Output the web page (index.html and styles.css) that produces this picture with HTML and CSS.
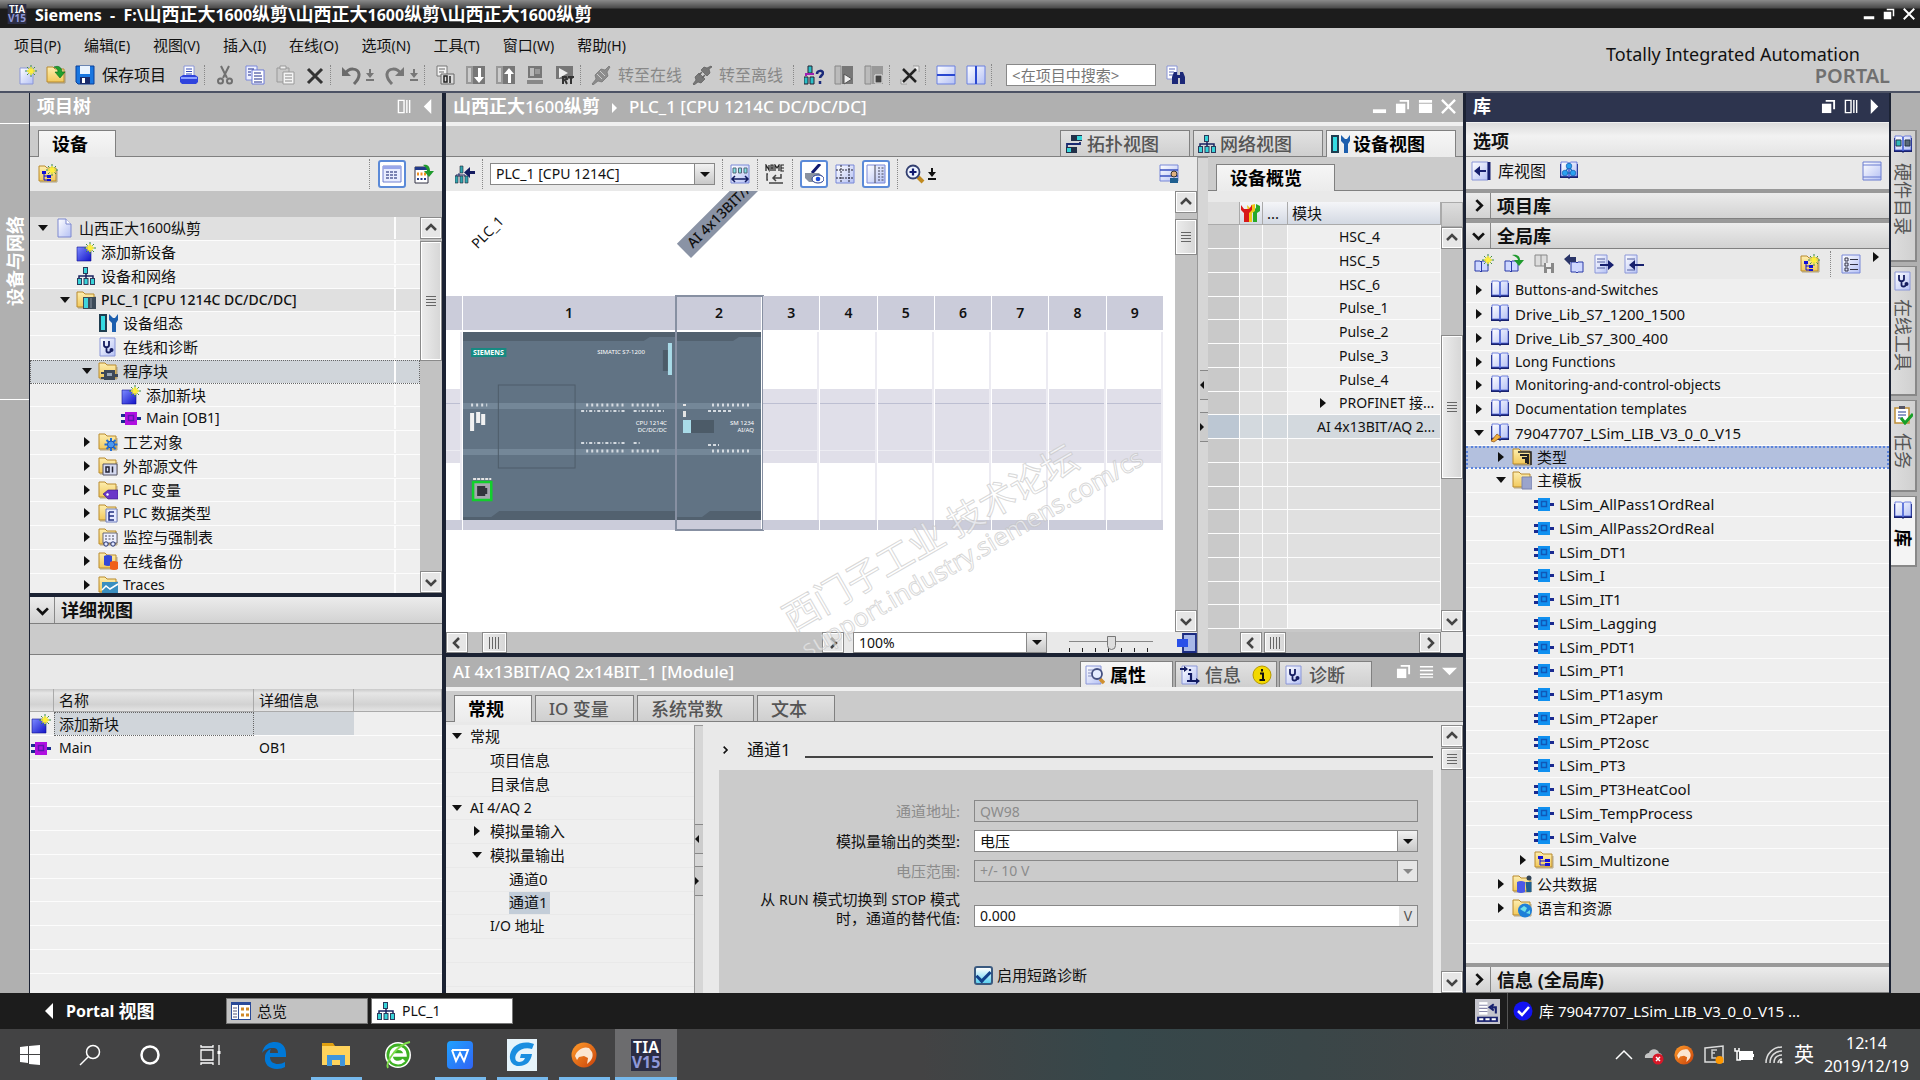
FILE: index.html
```html
<!DOCTYPE html>
<html lang="zh-CN">
<head>
<meta charset="utf-8">
<title>Siemens - TIA Portal V15</title>
<link rel="stylesheet" href="styles.css">
</head>
<body>
<svg class="defs" aria-hidden="true">
<defs>
<linearGradient id="gPage" x1="0" y1="0" x2="1" y2="1"><stop offset="0" stop-color="#fff"/><stop offset="1" stop-color="#b4c0f4"/></linearGradient>
<linearGradient id="gFold" x1="0" y1="0" x2="0" y2="1"><stop offset="0" stop-color="#fdeeb0"/><stop offset="1" stop-color="#f2c95c"/></linearGradient>
<linearGradient id="gBlue" x1="0" y1="0" x2="1" y2="1"><stop offset="0" stop-color="#7d8cff"/><stop offset="1" stop-color="#1313c8"/></linearGradient>
<linearGradient id="gOrange" x1="0" y1="0" x2="1" y2="1"><stop offset="0" stop-color="#ff9c2a"/><stop offset="1" stop-color="#c9410a"/></linearGradient>
<linearGradient id="gWps" x1="0" y1="0" x2="1" y2="1"><stop offset="0" stop-color="#1fa2ff"/><stop offset="1" stop-color="#3164f4"/></linearGradient>
</defs>
<symbol id="star" viewBox="0 0 20 20"><path d="M14 0v12M8 6h12M10 2l8 8M18 2l-8 8" stroke="#3b8a4a" stroke-width="1"/><path d="M14 2v8M10 6h8M11.500 3.500l5 5M16.500 3.500l-5 5" stroke="#ffee3a" stroke-width="1.500"/></symbol>
<symbol id="page" viewBox="0 0 20 20"><path d="M4 1h8l5 5v13H4z" fill="url(#gPage)" stroke="#7d88cf"/><path d="M12 1v5h5" fill="#fff" stroke="#7d88cf"/></symbol>
<symbol id="fold" viewBox="0 0 20 20"><path d="M1 17V2h6l2 2h9v13z" fill="url(#gFold)" stroke="#b98a2c"/><path d="M2 18h17V6" fill="none" stroke="#8f7436" stroke-opacity=".6"/></symbol>
<symbol id="new" viewBox="0 0 20 20"><path d="M3 3h13v16H3z" fill="url(#gPage)" stroke="#8a96d8"/><use href="#star"/></symbol>
<symbol id="open" viewBox="0 0 20 20"><use href="#fold"/><path d="M8 2c5-2 8 1 8 5h3l-5 6-5-6h3c0-3-2-4-4-5z" fill="#1fa02d" stroke="#0b6b1c" stroke-width=".6"/></symbol>
<symbol id="save" viewBox="0 0 20 20"><path d="M1 1h18v18H3l-2-2z" fill="#1976e0" stroke="#0b3f98"/><path d="M5 1h10v8H5z" fill="#eaf4ff"/><path d="M5 12h10v7H5z" fill="#1a2a6a"/><path d="M7 13h3v5H7z" fill="#fff"/></symbol>
<symbol id="print" viewBox="0 0 20 20"><path d="M5 1h10v10H5z" fill="#fff" stroke="#8a96d8"/><path d="M7 4h6M7 6.500h6M7 9h6" stroke="#334bb5"/><path d="M1 12l3-2h12l3 2v5l-2 2H3l-2-2z" fill="#2f43dd"/><path d="M2 12h16v2H2z" fill="#8da0ff"/></symbol>
<symbol id="cut" viewBox="0 0 20 20"><path d="M6 1l6 12M14 1L8 13" stroke="#707070" stroke-width="2"/><circle cx="5.500" cy="16" r="2.500" fill="none" stroke="#707070" stroke-width="2"/><circle cx="14.500" cy="16" r="2.500" fill="none" stroke="#707070" stroke-width="2"/></symbol>
<symbol id="copy" viewBox="0 0 20 20"><path d="M1 1h11v14H1z" fill="#eef1ff" stroke="#7a88dd"/><path d="M7 5h12v14H7z" fill="#fff" stroke="#6a78d8"/><path d="M3 4h6M3 7h3M3 10h3M9 8h7M9 11h8M9 14h8M9 17h8" stroke="#1c2a8c"/></symbol>
<symbol id="paste" viewBox="0 0 20 20"><path d="M2 3h12v14H2z" fill="#c9c9c9" stroke="#999"/><path d="M5 1h6v3H5z" fill="#eee" stroke="#999"/><path d="M8 7h11v12H8z" fill="#f4f4f4" stroke="#999"/><path d="M10 10h7M10 13h7M10 16h7" stroke="#888"/></symbol>
<symbol id="del" viewBox="0 0 20 20"><path d="M3 4l14 14M17 4L3 18" stroke="#333" stroke-width="3"/></symbol>
<symbol id="undo" viewBox="0 0 20 20"><path d="M1 2v9h9z" fill="#6b6b6b"/><path d="M4 9c4-7 13-6 14 0 .5 4-2 7-5 10" fill="none" stroke="#6b6b6b" stroke-width="3"/></symbol>
<symbol id="redo" viewBox="0 0 20 20"><path d="M19 2v9h-9z" fill="#777"/><path d="M16 9C12 2 3 3 2 9c-.5 4 2 7 5 10" fill="none" stroke="#777" stroke-width="3"/></symbol>
<symbol id="dn" viewBox="0 0 10 20"><path d="M4 4h2v4h3l-4 5-4-5h3zM1 14h8v2H1z" fill="currentColor"/></symbol>
<symbol id="comp" viewBox="0 0 20 20"><path d="M2 1h10v10H2z" fill="#f2f2f2" stroke="#777"/><path d="M4 4h6M4 7h5" stroke="#666"/><path d="M6 9h13v10H6z" fill="#ddd" stroke="#666"/><path d="M9 11h3v6H9zM15 11v7" fill="none" stroke="#222" stroke-width="1.500"/></symbol>
<symbol id="dl" viewBox="0 0 20 20"><path d="M1 1h7v18H1z" fill="#999"/><path d="M3 3h3v14H3z" fill="#ccc"/><path d="M8 1h12v18H8z" fill="#777"/><path d="M13 3h3v9h3l-5 6-5-6h4z" fill="#fff"/></symbol>
<symbol id="ul" viewBox="0 0 20 20"><path d="M1 1h7v18H1z" fill="#999"/><path d="M3 3h3v14H3z" fill="#ccc"/><path d="M8 1h12v18H8z" fill="#777"/><path d="M13 18h3V9h3l-5-6-5 6h4z" fill="#fff"/></symbol>
<symbol id="sim" viewBox="0 0 20 20"><path d="M3 1h14v12H3z" fill="#777"/><path d="M5 3h4v8H5z" fill="#bbb"/><path d="M10 4h5v5h-5z" fill="#999"/><path d="M2 15h16v4H2z" fill="#888"/></symbol>
<symbol id="rt" viewBox="0 0 20 20"><path d="M1 1h17v13H1z" fill="#777"/><path d="M4 3l9 5-9 5z" fill="#eee"/><path d="M8 19v-7h3l1 2-2 1 2 4M13 12h6M16 12v7" fill="none" stroke="#333" stroke-width="2"/></symbol>
<symbol id="plug" viewBox="0 0 20 20"><path d="M1 19l4-5-1-4 6-6 4 1 4-4 1 1-3 5 1 4-6 6-4-1-5 4z" fill="#8c8c8c" stroke="#707070" stroke-width=".7"/><path d="M6 9l5 5M9 6l5 5" stroke="#ccc"/></symbol>
<symbol id="unplug" viewBox="0 0 20 20"><path d="M1 19l3-4-1-3 4-4 6 6-4 4-3-1-4 3zM19 1l-4 2-3-1-3 3 6 6 3-3-1-4 3-2z" fill="#777" stroke="#5c5c5c" stroke-width=".7"/><path d="M7 10l3-3M10 13l3-3" stroke="#666" stroke-width="1.500"/></symbol>
<symbol id="net" viewBox="0 0 20 20"><path d="M10 7v5M3 13v-3h14v3" fill="none" stroke="#1a2260" stroke-width="1.500"/><path d="M7 1h5v7H7zM1 12h5v7H1zM7.500 12h5v7h-5zM14 12h5v7h-5z" fill="#2b3a5c"/><path d="M8 2h3v5H8zM2 13h3v5H2zM8.500 13h3v5h-3zM15 13h3v5h-3z" fill="#37d3d8"/></symbol>
<symbol id="netq" viewBox="0 0 20 20"><path d="M4 1h4v7H4zM0 12h4v7H0zM6 12h4v7H6z" fill="#2ac0c8" stroke="#223"/><path d="M2 11V9h8" stroke="#a020b0" stroke-width="2" fill="none"/><path d="M13 9c0-4 6-4 6-1 0 2-3 3-3 5M16 16v3" fill="none" stroke="#1a2a7a" stroke-width="2.500"/></symbol>
<symbol id="run" viewBox="0 0 20 20"><path d="M1 1h6v18H1z" fill="#bbb" stroke="#888"/><path d="M8 1h11v18H8z" fill="#777"/><path d="M10 9l8 5-8 5z" fill="#eee" stroke="#555"/></symbol>
<symbol id="stop" viewBox="0 0 20 20"><path d="M1 1h6v18H1z" fill="#bbb" stroke="#888"/><path d="M8 1h11v18H8z" fill="#999"/><path d="M11 10h7v8h-7z" fill="#444" stroke="#eee"/></symbol>
<symbol id="xref" viewBox="0 0 20 20"><path d="M13 1h6v6M1 14v5h6" fill="#eee" stroke="#999"/><path d="M3 4l13 13M16 4L3 17" stroke="#222" stroke-width="2.500"/></symbol>
<symbol id="sph" viewBox="0 0 20 20"><path d="M1 1h18v18H1z" fill="url(#gPage)" stroke="#6a80e0"/><path d="M1 10h18" stroke="#2a48d0" stroke-width="2"/></symbol>
<symbol id="spv" viewBox="0 0 20 20"><path d="M1 1h18v18H1z" fill="url(#gPage)" stroke="#6a80e0"/><path d="M10 1v18" stroke="#2a48d0" stroke-width="2"/></symbol>
<symbol id="bino" viewBox="0 0 20 20"><path d="M1 1h10v13H1z" fill="#fff" stroke="#8a96d8"/><path d="M3 4h6M3 7h5M3 10h4" stroke="#5a68b8"/><path d="M6 19v-7l2-5h3v3h3V7h3l2 5v7h-5v-6h-2v6z" fill="#1c2878"/></symbol>
<symbol id="foldnew" viewBox="0 0 20 20"><use href="#fold"/><path d="M4 7h4v3H4zM9 11h4v3H9zM9 15h4v2H9z" fill="#1010d8"/><path d="M6 10v6h3M6 12h3" fill="none" stroke="#1010d8"/><use href="#star"/></symbol>
<symbol id="foldtree" viewBox="0 0 20 20"><use href="#fold"/><path d="M4 6h5v3H4zM11 9h5v3h-5zM11 13h5v3h-5z" fill="#1010d8"/><path d="M6 9v6h5M6 11h5" fill="none" stroke="#1010d8"/></symbol>
<symbol id="grid" viewBox="0 0 20 20"><path d="M1 2h18v16H1z" fill="#e9edff" stroke="#7080d0"/><path d="M1 2h18v3H1z" fill="#9aa8ea"/><path d="M4 8h12M4 11h12M4 14h12" stroke="#55609a" stroke-width="1.500" stroke-dasharray="3 1"/></symbol>
<symbol id="gridgo" viewBox="0 0 20 20"><path d="M1 3h13v16H1z" fill="#fff" stroke="#334"/><path d="M1 3h13v3H1z" fill="#223a8a"/><path d="M3 10h9" stroke="#f09020" stroke-width="3" stroke-dasharray="2 1.500"/><path d="M3 15h9" stroke="#223a8a" stroke-width="2" stroke-dasharray="2 1.500"/><path d="M9 1c5-1 7 2 7 6h4l-5 6-5-6h3c0-3-2-4-4-6z" fill="#1f9a2d"/></symbol>
<symbol id="add" viewBox="0 0 20 20"><path d="M1 5h14v14H1z" fill="url(#gBlue)" stroke="#0d0d90" stroke-width=".6"/><use href="#star"/></symbol>
<symbol id="plc" viewBox="0 0 20 20"><use href="#fold"/><path d="M7 7h13v12H7z" fill="#3c4a58"/><path d="M8 8h4v10H8z" fill="#3fd4dc"/><path d="M15 8v10" stroke="#8793a0"/></symbol>
<symbol id="cfg" viewBox="0 0 20 20"><path d="M1 1h8v18H1z" fill="#1f3d50"/><path d="M3 3h4v14H3z" fill="#35dbe2"/><path d="M11 1v6l3 3v9h4v-9l2-3V1l-3 4h-2z" fill="#1d5fae"/></symbol>
<symbol id="diag" viewBox="0 0 20 20"><path d="M2 1h15v18H2z" fill="url(#gPage)" stroke="#8a96d8"/><path d="M6 4v4c0 3 5 3 5 0V4M8.500 11v3c0 2 4 2 4 0" fill="none" stroke="#141c60" stroke-width="1.800"/><circle cx="13.500" cy="13" r="2" fill="#141c60"/></symbol>
<symbol id="fb" viewBox="0 0 20 20"><path d="M0 6h5v3H0zM0 12h5v3H0zM14 9h6v3h-6z" fill="#1a2a90"/><path d="M4 4h12v13H4z" fill="currentColor"/><path d="M7.500 7.500h5v5h-5z" fill="none" stroke="#102080" stroke-opacity=".5" stroke-width="1.500"/></symbol>
<symbol id="fprog" viewBox="0 0 20 20"><use href="#fold"/><path d="M3 11h4v2H3zM3 16h4v2H3zM16 13h4v3h-4zM6 9h11v10H6z" fill="#3d4858"/><path d="M9 12h5v3H9z" fill="#9aa6b5"/></symbol>
<symbol id="fgear" viewBox="0 0 20 20"><use href="#fold"/><path d="M13 6v13M6.500 12.500h13M8.500 8l9 9M17.500 8l-9 9" stroke="#1f6fd8" stroke-width="2"/><circle cx="13" cy="12.500" r="3.500" fill="#4a98f0" stroke="#1f4fb0"/></symbol>
<symbol id="f01" viewBox="0 0 20 20"><use href="#fold"/><path d="M5 8h14v11H5z" fill="#d5daf0" stroke="#556"/><path d="M8 11h3v5H8zM14.500 10.500v6" fill="none" stroke="#223" stroke-width="1.500"/></symbol>
<symbol id="ftag" viewBox="0 0 20 20"><use href="#fold"/><path d="M5 14l5-4h10v9H10z" fill="#6a35c8" stroke="#3a1880" stroke-width=".6"/><circle cx="9.500" cy="14.500" r="1.200" fill="#fff"/></symbol>
<symbol id="fe" viewBox="0 0 20 20"><use href="#fold"/><path d="M8 6h11v13H8z" fill="#e6eaff" stroke="#7080c0"/><path d="M11 9v8h5M11 9h5M11 13h5" fill="none" stroke="#223080" stroke-width="1.500"/></symbol>
<symbol id="ftab" viewBox="0 0 20 20"><use href="#fold"/><path d="M5 6h14v10H5z" fill="#eef0ff" stroke="#667"/><path d="M7 9h10M7 12h10" stroke="#445" stroke-dasharray="2 1.500"/><circle cx="8" cy="17" r="2.200" fill="#dfe6ff" stroke="#223070"/><circle cx="15" cy="17" r="2.200" fill="#dfe6ff" stroke="#223070"/></symbol>
<symbol id="fbak" viewBox="0 0 20 20"><use href="#fold"/><path d="M6 5q4-2 8 0v9q-4 2-8 0z" fill="#3348d8"/><path d="M12 11q4-2 8 0v7q-4 2-8 0z" fill="#f06018"/></symbol>
<symbol id="ftrace" viewBox="0 0 20 20"><use href="#fold"/><path d="M4 7h16v12H4z" fill="#3a8fc0"/><path d="M4 15l4-4 4 3 8-5" fill="none" stroke="#fff" stroke-width="1.500"/></symbol>
<symbol id="ftype" viewBox="0 0 20 20"><use href="#fold"/><path d="M6 5h13v13" fill="none" stroke="#222" stroke-width="1.500"/><path d="M8 8h8v9M10 11h4v5" fill="none" stroke="#222" stroke-width="2"/></symbol>
<symbol id="fcopy" viewBox="0 0 20 20"><use href="#fold"/><path d="M10 7h10v12H10z" fill="#9aa4cc" stroke="#7a84b0"/></symbol>
<symbol id="fdata" viewBox="0 0 20 20"><use href="#fold"/><path d="M5 8q4-2 8 0v10q-4 2-8 0z" fill="#4a58e8"/><circle cx="17" cy="4" r="2.500" fill="#345"/><path d="M13.500 8h6v10h-5z" fill="#1f5f90"/></symbol>
<symbol id="flang" viewBox="0 0 20 20"><use href="#fold"/><circle cx="13" cy="12.500" r="7" fill="#1f80d8"/><path d="M8 11l4-3 3 2-2 4-2-1zM14 15l4-3v4z" fill="#6fe0e8"/></symbol>
<symbol id="book" viewBox="0 0 20 20"><path d="M1 17V3h18v14h-8l-1 1-1-1z" fill="#17206e"/><path d="M2 1h6l2 1 2-1h6v14h-7l-1 1-1-1H2z" fill="url(#gPage)" stroke="#5468d8" stroke-width=".8"/><path d="M10 2v14" stroke="#3a55d0" stroke-width="1.500"/></symbol>
<symbol id="bookedit" viewBox="0 0 20 20"><use href="#book"/><path d="M1 18l6-7 4 3-7 5z" fill="#f0b040" stroke="#8a4a10" stroke-width=".7"/></symbol>
<symbol id="booknew" viewBox="0 0 20 20"><path d="M1 7h5l1 1 1-1h6v10H8l-1 1-1-1H1z" fill="#cfd8ff" stroke="#2a3aa8"/><path d="M7.500 8v10" stroke="#2a3aa8"/><use href="#star"/></symbol>
<symbol id="bookopen" viewBox="0 0 20 20"><path d="M1 7h5l1 1 1-1h6v10H8l-1 1-1-1H1z" fill="#cfd8ff" stroke="#2a3aa8"/><path d="M7.500 8v10" stroke="#2a3aa8"/><path d="M8 1c6-1 8 2 8 5h4l-5 6-5-6h4c0-2-2-3-6-5z" fill="#1f9a2d"/></symbol>
<symbol id="booksave" viewBox="0 0 20 20"><path d="M1 1h12v11H1zM7 1v11" fill="#ddd" stroke="#888"/><path d="M10 9h10v10H10z" fill="#888"/><path d="M12 9h5v4h-5zM13 15h4v4h-4z" fill="#eee"/></symbol>
<symbol id="bookundo" viewBox="0 0 20 20"><path d="M7 8h5l1 1 1-1h5v10h-5l-1 1-1-1H7z" fill="#cfd8ff" stroke="#2a3aa8"/><path d="M0 5l6-5v3h6v5H6v3z" fill="#2a3568"/></symbol>
<symbol id="exp" viewBox="0 0 20 20"><path d="M1 1h12v18H1z" fill="url(#gPage)" stroke="#8a96d8"/><path d="M3 5h8M3 8h8M3 14h8" stroke="#5560a0"/><path d="M6 10h8V6l6 5-6 5v-4H6z" fill="#17206e"/></symbol>
<symbol id="imp" viewBox="0 0 20 20"><path d="M1 1h12v18H1z" fill="url(#gPage)" stroke="#8a96d8"/><path d="M3 5h8M3 16h8" stroke="#5560a0"/><path d="M20 10h-9V6l-6 5 6 5v-4h9z" fill="#17206e"/></symbol>
<symbol id="list" viewBox="0 0 20 20"><path d="M1 1h18v18H1z" fill="url(#gPage)" stroke="#7888d8"/><path d="M4 4h3v3H4zM4 9h3v3H4zM4 14h3v3H4z" fill="none" stroke="#334"/><path d="M9 5.500h8M9 10.500h8M9 15.500h8" stroke="#334"/></symbol>
<symbol id="back" viewBox="0 0 20 20"><path d="M1 1h16v18H1z" fill="url(#gPage)" stroke="#8a96d8"/><path d="M18 1v18" stroke="#17206e" stroke-width="3"/><path d="M15 9H9V5l-6 5 6 5v-4h6z" fill="#17206e"/></symbol>
<symbol id="libtri" viewBox="0 0 20 20"><use href="#book"/><path d="M10 5L6 12h8z" fill="none" stroke="#1a70c8" stroke-width="1.500"/><circle cx="10" cy="5" r="2.800" fill="#2aa0f0" stroke="#1560b0" stroke-width=".7"/><circle cx="6" cy="12" r="2.800" fill="#2aa0f0" stroke="#1560b0" stroke-width=".7"/><circle cx="14" cy="12" r="2.800" fill="#2aa0f0" stroke="#1560b0" stroke-width=".7"/></symbol>
<symbol id="win" viewBox="0 0 20 20"><path d="M1 1h18v18H1z" fill="url(#gPage)" stroke="#6a7cd0"/><path d="M1 4h18M1 16h18" stroke="#6a7cd0"/></symbol>
<symbol id="netin" viewBox="0 0 20 20"><path d="M4 9v4M1 13v-2h9v2" fill="none" stroke="#1a2260"/><path d="M5 2h3v7H5zM0 12h3v7H0zM5 12h3v7H5zM10 12h3v7h-3z" fill="#2fa6b0" stroke="#223" stroke-width=".6"/><path d="M20 7h-5V3L9 8.500l6 5.500v-4h5z" fill="#141c60"/></symbol>
<symbol id="meas" viewBox="0 0 20 20"><path d="M1 1h18v18H1z" fill="url(#gPage)" stroke="#7888d8"/><path d="M3 4h3v5H3zM8.500 4h3v5h-3zM14 4h3v5h-3z" fill="#7fe0e4" stroke="#567"/><path d="M2 15h16M5 12l-3 3 3 3M15 12l3 3-3 3" fill="none" stroke="#111a60" stroke-width="1.500"/></symbol>
<symbol id="name" viewBox="0 0 20 20"><path d="M1 7V1l3 5V1M6 7V1h2v6M6 4h2M10 7V1l2 3 2-3v6M19 1h-3v6h3M16 4h3" fill="none" stroke="#222" stroke-width="1.200"/><path d="M3 10h-1v6h1M16 10v4h-7M11 11l-3 3 3 3M4 19h14" fill="none" stroke="#444" stroke-width="1.500"/></symbol>
<symbol id="eye" viewBox="0 0 20 20"><path d="M16 0L8 9" stroke="#111a70" stroke-width="3"/><path d="M1 9h14l4 4v5H5l-4-4z" fill="#8a92a0"/><ellipse cx="14" cy="15" rx="6" ry="4" fill="#fff" stroke="#223a90"/><circle cx="14" cy="15" r="2.300" fill="#1a4ad8"/></symbol>
<symbol id="gridd" viewBox="0 0 20 20"><path d="M1 1h18v18H1z" fill="url(#gPage)" stroke="#7888d8"/><path d="M6 1v18M14 1v18M1 6h18M1 14h18" stroke="#223" stroke-dasharray="2 1"/></symbol>
<symbol id="pane" viewBox="0 0 20 20"><path d="M1 1h18v18H1z" fill="url(#gPage)" stroke="#7888d8"/><path d="M9 1v18M12 4h2M12 7h2M12 10h2M12 13h2M12 16h2M15.500 4h2M15.500 7h2M15.500 10h2M15.500 13h2M15.500 16h2" stroke="#445"/></symbol>
<symbol id="zoom" viewBox="0 0 20 20"><path d="M13 13l5 5" stroke="#c08a20" stroke-width="4"/><circle cx="8" cy="8" r="6.500" fill="#eef4ff" stroke="#333f70" stroke-width="1.800"/><path d="M8 4.500v7M4.500 8h7" stroke="#111a70" stroke-width="2.200"/></symbol>
<symbol id="user" viewBox="0 0 20 20"><path d="M1 1h18v16H1z" fill="url(#gPage)" stroke="#7888d8"/><path d="M1 6h18M1 12h18" stroke="#3a50c0" stroke-width="1.500"/><circle cx="15" cy="10" r="3" fill="#e0b080" stroke="#333"/><path d="M11 19v-5h8v5z" fill="#1f5f90"/></symbol>
<symbol id="topo" viewBox="0 0 20 20"><path d="M7 1h11v6H7zM2 13h11v6H2z" fill="#223048"/><path d="M13 2h5v4h-5zM3 14h4v4H3z" fill="#37d3d8"/><path d="M16 8v2H3v3" fill="none" stroke="#1a2a70" stroke-width="1.800"/></symbol>
<symbol id="wrench" viewBox="0 0 20 20"><path d="M12 2l3 4V1l4 2v5l-3 2v9h-4V9l2-2z" fill="#28a828"/><path d="M6 2l4 4V2l4-1v7l-3 2v9H7V9z" fill="#f0c818"/><path d="M0 2v5l3 3v9h5v-9l3-3V2L8 6H3z" fill="#d81818"/></symbol>
<symbol id="prop" viewBox="0 0 20 20"><path d="M1 1h15v18H1z" fill="url(#gPage)" stroke="#8a96d8"/><path d="M3 5h5M3 8h4M3 11h4" stroke="#8890c0"/><path d="M15 14l4 4" stroke="#d09030" stroke-width="3.500"/><circle cx="12" cy="9" r="5" fill="#e4ecff" stroke="#445080" stroke-width="1.800"/></symbol>
<symbol id="info" viewBox="0 0 20 20"><path d="M2 1h15v18H2z" fill="url(#gPage)" stroke="#8a96d8"/><path d="M0 3h4V1l4 3-4 3V5H0zM12 15h4v-2l4 3-4 3v-2h-4z" fill="#111a60"/><path d="M10 4v2M8 9h3v7M7 16h6" stroke="#111a60" stroke-width="2.200" fill="none"/></symbol>
<symbol id="ibadge" viewBox="0 0 20 20"><circle cx="10" cy="10" r="9" fill="#f2d800" stroke="#b89a00"/><path d="M10 4v2.500M8 8.500h3V15M7.500 15h5.500" stroke="#111" stroke-width="2" fill="none"/></symbol>
<symbol id="hw" viewBox="0 0 20 20"><use href="#book"/><path d="M3 5h5v6H3z" fill="#2fb8b8" stroke="#234"/><path d="M12 5h5v6h-5z" fill="#5a6a78" stroke="#234"/></symbol>
<symbol id="task" viewBox="0 0 20 20"><path d="M2 3h14v15H2z" fill="#fff" stroke="#c09038" stroke-width="1.500"/><path d="M6 1h6v3H6z" fill="#556"/><path d="M5 7h8M5 10h8M5 13h5" stroke="#223a90"/><path d="M8 13l4 5 8-9" fill="none" stroke="#18a028" stroke-width="3"/></symbol>
<symbol id="ovw" viewBox="0 0 20 20"><path d="M0 1h20v18H0z" fill="#2a4a98"/><path d="M1 4h6v14H1zM8 4h11v14H8z" fill="#fff"/><path d="M2 7h4M2 10h4M2 13h4M2 16h4" stroke="#557"/><path d="M10 8h3M15 8h3M10 14h3M15 14h3" stroke="#d08828" stroke-width="3"/></symbol>
<symbol id="zfit" viewBox="0 0 20 20"><path d="M6 1h13v18H6z" fill="#a8b8e8" stroke="#1a2a80" stroke-width="1.800"/><path d="M0 6h11v8H0z" fill="#2a50e8"/></symbol>
<symbol id="restore" viewBox="0 0 16 16"><path d="M5 1h10v10h-2V3H5z" fill="#fff"/><path d="M1 5h10v10H1z" fill="#fff"/></symbol>
<symbol id="mini" viewBox="0 0 16 16"><path d="M1 11h14v4H1z" fill="#fff"/></symbol>
<symbol id="maxi" viewBox="0 0 16 16"><path d="M1 1h14v3H1zM1 5h14v10H1z" fill="#fff"/></symbol>
<symbol id="cls" viewBox="0 0 16 16"><path d="M1 1l14 14M15 1L1 15" stroke="#fff" stroke-width="2.500"/></symbol>
<symbol id="cols" viewBox="0 0 16 16"><path d="M1.500 1.500h6v13h-6zM10.500 1v14M13.500 1v14" fill="none" stroke="#fff" stroke-width="1.500"/></symbol>
<symbol id="lines" viewBox="0 0 16 16"><path d="M1 3h14M1 7h14M1 11h14M1 14h14" stroke="#fff" stroke-width="1.500"/></symbol>
<symbol id="tl" viewBox="0 0 16 16"><path d="M12 0v16L4 8z" fill="#fff"/></symbol>
<symbol id="tr" viewBox="0 0 16 16"><path d="M4 0v16l8-8z" fill="#fff"/></symbol>
<symbol id="td" viewBox="0 0 16 16"><path d="M0 4h16l-8 8z" fill="#fff"/></symbol>
<symbol id="chev" viewBox="0 0 12 12"><path d="M1 8l5-5 5 5" fill="none" stroke="currentColor" stroke-width="2.500"/></symbol>
<symbol id="lynx" viewBox="0 0 26 26"><circle cx="13" cy="13" r="12.500" fill="url(#gOrange)"/><path d="M4 14C6 8 12 4 18 6l3 4c2 5-1 9-5 12l1-6-4-2-5 1-2 3z" fill="#fbe6d2"/></symbol>
<symbol id="tia" viewBox="0 0 30 32"><path d="M0 0h30v32H0z" fill="#2b2d44"/><text x="15" y="14" text-anchor="middle" font-size="16" font-weight="600" fill="#fff">TIA</text><text x="15" y="29" text-anchor="middle" font-size="16" font-weight="700" fill="#8f98d8">V15</text></symbol>
</svg>

<header class="titlebar">
  <svg class="i"><use href="#tia"/></svg>
  <h1><span lang="en">Siemens&nbsp; -&nbsp; F:\</span>山西正大<span lang="en">1600</span>纵剪\山西正大<span lang="en">1600</span>纵剪\山西正大<span lang="en">1600</span>纵剪</h1>
  <div class="wbtns"><button aria-label="最小化"><svg><use href="#mini"/></svg></button><button aria-label="还原"><svg><use href="#restore"/></svg></button><button aria-label="关闭"><svg><use href="#cls"/></svg></button></div>
</header>

<div class="command">
  <div class="command-left">
    <nav class="menu"><a href="#">项目<span lang="en">(P)</span></a><a href="#">编辑<span lang="en">(E)</span></a><a href="#">视图<span lang="en">(V)</span></a><a href="#">插入<span lang="en">(I)</span></a><a href="#">在线<span lang="en">(O)</span></a><a href="#">选项<span lang="en">(N)</span></a><a href="#">工具<span lang="en">(T)</span></a><a href="#">窗口<span lang="en">(W)</span></a><a href="#">帮助<span lang="en">(H)</span></a></nav>
    <div class="toolbar main-tools">
      <div class="grp tight"><button aria-label="新建"><svg class="i"><use href="#new"/></svg></button><button aria-label="打开"><svg class="i"><use href="#open"/></svg></button><button class="label"><svg class="i"><use href="#save"/></svg>保存项目</button><button aria-label="打印"><svg class="i"><use href="#print"/></svg></button></div>
      <div class="grp"><button aria-label="剪切"><svg class="i"><use href="#cut"/></svg></button><button aria-label="复制"><svg class="i"><use href="#copy"/></svg></button><button aria-label="粘贴"><svg class="i"><use href="#paste"/></svg></button><button aria-label="删除"><svg class="i"><use href="#del"/></svg></button></div>
      <div class="grp undo"><button aria-label="撤销"><svg class="i"><use href="#undo"/></svg><svg class="i half"><use href="#dn"/></svg></button><button aria-label="重做"><svg class="i"><use href="#redo"/></svg><svg class="i half"><use href="#dn"/></svg></button></div>
      <div class="grp"><button aria-label="编译"><svg class="i"><use href="#comp"/></svg></button><button aria-label="下载"><svg class="i"><use href="#dl"/></svg></button><button aria-label="上传"><svg class="i"><use href="#ul"/></svg></button><button aria-label="仿真"><svg class="i"><use href="#sim"/></svg></button><button aria-label="运行系统"><svg class="i"><use href="#rt"/></svg></button></div>
      <div class="grp online"><button class="label off"><svg class="i"><use href="#plug"/></svg>转至在线</button><button class="label off"><svg class="i"><use href="#unplug"/></svg>转至离线</button></div>
      <div class="grp"><button aria-label="可访问的设备"><svg class="i"><use href="#netq"/></svg></button><button aria-label="启动"><svg class="i"><use href="#run"/></svg></button><button aria-label="停止"><svg class="i"><use href="#stop"/></svg></button></div>
      <div class="grp"><button aria-label="交叉引用"><svg class="i"><use href="#xref"/></svg></button></div>
      <div class="grp"><button aria-label="水平拆分"><svg class="i"><use href="#sph"/></svg></button><button aria-label="垂直拆分"><svg class="i"><use href="#spv"/></svg></button></div>
      <div class="grp find"><input type="text" aria-label="在项目中搜索" placeholder="&lt;在项目中搜索&gt;"><button aria-label="搜索"><svg class="i"><use href="#bino"/></svg></button></div>
    </div>
  </div>
  <div class="brand"><p>Totally Integrated Automation</p><p class="portal">PORTAL</p></div>
</div>

<main class="work">
  <aside class="rail left-rail"><div class="rail-cap"></div><button class="rail-label">设备与网络</button><div class="rail-rest"></div></aside>

  <section class="panel project">
    <div class="phead"><h2>项目树</h2><button aria-label="列"><svg><use href="#cols"/></svg></button><button aria-label="折叠"><svg><use href="#tl"/></svg></button></div>
    <div class="tabs"><button class="tab on wide">设备</button></div>
    <div class="toolbar sub"><button aria-label="新建组"><svg class="i"><use href="#foldnew"/></svg></button><span class="push sep"></span><button class="boxed" aria-label="列表"><svg class="i"><use href="#grid"/></svg></button><button aria-label="转到"><svg class="i"><use href="#gridgo"/></svg></button></div>
    <div class="blank"></div>
    <div class="scrollbox">
      <ul class="tree rows two">
        <li class="l0 dark"><b class="tri d"></b><svg class="i"><use href="#page"/></svg>山西正大<span lang="en">1600</span>纵剪</li>
        <li class="l1"><b class="tri"></b><svg class="i"><use href="#add"/></svg>添加新设备</li>
        <li class="l1"><b class="tri"></b><svg class="i"><use href="#net"/></svg>设备和网络</li>
        <li class="l1 dark medium" lang="en"><b class="tri d"></b><svg class="i"><use href="#plc"/></svg>PLC_1 [CPU 1214C DC/DC/DC]</li>
        <li class="l2"><b class="tri"></b><svg class="i"><use href="#cfg"/></svg>设备组态</li>
        <li class="l2"><b class="tri"></b><svg class="i"><use href="#diag"/></svg>在线和诊断</li>
        <li class="l2 sel"><b class="tri d"></b><svg class="i"><use href="#fprog"/></svg>程序块</li>
        <li class="l3"><b class="tri"></b><svg class="i"><use href="#add"/></svg>添加新块</li>
        <li class="l3" lang="en"><b class="tri"></b><svg class="i ob"><use href="#fb"/></svg>Main [OB1]</li>
        <li class="l2"><b class="tri r"></b><svg class="i"><use href="#fgear"/></svg>工艺对象</li>
        <li class="l2"><b class="tri r"></b><svg class="i"><use href="#f01"/></svg>外部源文件</li>
        <li class="l2"><b class="tri r"></b><svg class="i"><use href="#ftag"/></svg><span lang="en">PLC&nbsp;</span>变量</li>
        <li class="l2"><b class="tri r"></b><svg class="i"><use href="#fe"/></svg><span lang="en">PLC&nbsp;</span>数据类型</li>
        <li class="l2"><b class="tri r"></b><svg class="i"><use href="#ftab"/></svg>监控与强制表</li>
        <li class="l2"><b class="tri r"></b><svg class="i"><use href="#fbak"/></svg>在线备份</li>
        <li class="l2" lang="en"><b class="tri r"></b><svg class="i"><use href="#ftrace"/></svg>Traces</li>
      </ul>
      <div class="sb v"><button aria-label="上"><svg><use href="#chev"/></svg></button><i class="thumb t-tree"></i><button class="end dn" aria-label="下"><svg><use href="#chev"/></svg></button></div>
    </div>
    <section class="details">
      <div class="acc"><button aria-label="折叠"><svg class="dnc"><use href="#chev"/></svg></button><h2>详细视图</h2></div>
      <div class="band1"></div><div class="band2"></div>
      <table class="dtable rows">
        <thead><tr><th class="c-ic"></th><th class="c-nm">名称</th><th class="c-dt">详细信息</th><th></th></tr></thead>
        <tbody>
          <tr class="dsel"><td><svg class="i"><use href="#add"/></svg></td><td class="focus">添加新块</td><td class="shade"></td><td></td></tr>
          <tr lang="en"><td><svg class="i ob"><use href="#fb"/></svg></td><td>Main</td><td>OB1</td><td></td></tr>
          <tr><td colspan="4"></td></tr><tr><td colspan="4"></td></tr><tr><td colspan="4"></td></tr><tr><td colspan="4"></td></tr><tr><td colspan="4"></td></tr><tr><td colspan="4"></td></tr><tr><td colspan="4"></td></tr><tr><td colspan="4"></td></tr><tr><td colspan="4"></td></tr><tr><td colspan="4"></td></tr>
        </tbody>
      </table>
    </section>
  </section>

  <div class="center">
    <section class="panel editor">
      <div class="phead"><h2>山西正大<span lang="en">1600</span>纵剪<b class="crumb"></b><span lang="en">PLC_1 [CPU 1214C DC/DC/DC]</span></h2><button aria-label="最小化"><svg><use href="#mini"/></svg></button><button aria-label="还原"><svg><use href="#restore"/></svg></button><button aria-label="最大化"><svg><use href="#maxi"/></svg></button><button aria-label="关闭"><svg><use href="#cls"/></svg></button></div>
      <div class="tabs right"><button class="tab view"><svg class="i"><use href="#topo"/></svg>拓扑视图</button><button class="tab view"><svg class="i"><use href="#net"/></svg>网络视图</button><button class="tab view on"><svg class="i"><use href="#cfg"/></svg>设备视图</button></div>
      <div class="edit-body">
        <div class="device">
          <div class="toolbar sub dev-tools">
            <button aria-label="网络"><svg class="i"><use href="#netin"/></svg></button><span class="sep"></span>
            <div class="combo dev"><select aria-label="设备" lang="en"><option>PLC_1 [CPU 1214C]</option></select><span class="arr"></span></div><span class="sep"></span>
            <button aria-label="测量"><svg class="i"><use href="#meas"/></svg></button><span class="sep"></span>
            <button aria-label="名称"><svg class="i"><use href="#name"/></svg></button><span class="sep"></span>
            <button class="boxed" aria-label="显示"><svg class="i"><use href="#eye"/></svg></button><button aria-label="网格"><svg class="i"><use href="#gridd"/></svg></button><button class="boxed" aria-label="窗格"><svg class="i"><use href="#pane"/></svg></button><span class="sep"></span>
            <button class="zoomer" aria-label="缩放"><svg class="i"><use href="#zoom"/></svg><svg class="i half"><use href="#dn"/></svg></button>
            <button class="push" aria-label="布局"><svg class="i"><use href="#user"/></svg></button>
          </div>
          <div class="canvas-row">
            <div class="canvas">
              <span class="tag plc-tag" lang="en">PLC_1</span>
              <span class="tag ai-tag" lang="en">AI 4x13BIT/AQ 2x14BIT_1</span>
              <div class="rack" lang="en">
                <div class="slot"><b></b><div class="bay"></div><i></i></div>
                <div class="slot"><b>1</b><div class="bay">
                  <svg class="mod" viewBox="0 0 210 188" preserveAspectRatio="none"><path d="M0 0h210v188H0z" fill="#617384"/><path d="M0 0h210v5h-25l-6 4H0zM0 188h210v-9H36l-8 6H0z" fill="#52616f"/><path d="M8 16h35v9H8z" fill="#168a82"/><text x="10" y="23" font-size="7" font-weight="700" fill="#fff">SIEMENS</text><text x="133" y="22" font-size="6" fill="#fff">SIMATIC S7-1200</text><path d="M198 18h8v21h-8z" fill="#4c5b68"/><path d="M203 11h4v32h-4z" fill="#a9dbe8"/><path d="M0 71h35v6H0zM35 71h76v6H35zM111 71h99v6h-99zM0 117h35v6H0zM111 117h99v6h-99zM35 117h76v6H35z" fill="#748798"/><path d="M35 53h76v83H35z" fill="none" stroke="#4f5d6a"/><path d="M8 73h16M122 73h38M167 73h30M122 119h38M167 119h30" stroke="#d4dae0" stroke-width="3" stroke-dasharray="2 3"/><path d="M117 79h45M169 79h30M117 111h45M169 111h8" stroke="#d4dae0" stroke-width="2" stroke-dasharray="3 2 1 2"/><path d="M7 81h4v18H7zM13 80h4v11h-4zM18 82h4v11h-4z" fill="#f1f1f1"/><text x="202" y="93" font-size="6" fill="#fff" text-anchor="end">CPU 1214C</text><text x="202" y="100" font-size="6" fill="#fff" text-anchor="end">DC/DC/DC</text><path d="M10 147h18" stroke="#e4e4e4" stroke-width="2" stroke-dasharray="3 1"/><path d="M10 150h18v18H10z" fill="#a6a6ae" stroke="#12cf2c" stroke-width="2.500"/><path d="M14 154h8v2h2v6h-2v2h-8z" fill="#33343c"/></svg>
                </div><i></i></div>
                <div class="slot picked"><b>2</b><div class="bay">
                  <svg class="mod" viewBox="0 0 84 188" preserveAspectRatio="none"><path d="M0 0h84v188H0z" fill="#617384"/><path d="M0 0h84v5H62l-6 4H0zM0 188h84v-9H33l-8 6H0z" fill="#52616f"/><path d="M0 71h84v6H0zM0 117h84v6H0z" fill="#748798"/><path d="M35 73h40M35 119h40" stroke="#d4dae0" stroke-width="3" stroke-dasharray="2 3"/><path d="M31 79h24M31 113h11" stroke="#d4dae0" stroke-width="2" stroke-dasharray="3 2"/><path d="M14 88h23v13H14z" fill="#4c5b68"/><path d="M6 88h8v13H6z" fill="#a9dbe8"/><path d="M6 72h3v2H6zM6 79h3v6H6z" fill="#e4e4e4"/><text x="77" y="93" font-size="6" fill="#fff" text-anchor="end">SM 1234</text><text x="77" y="100" font-size="6" fill="#fff" text-anchor="end">AI/AQ</text></svg>
                </div><i></i></div>
                <div class="slot"><b>3</b><div class="bay"></div><i></i></div><div class="slot"><b>4</b><div class="bay"></div><i></i></div><div class="slot"><b>5</b><div class="bay"></div><i></i></div><div class="slot"><b>6</b><div class="bay"></div><i></i></div><div class="slot"><b>7</b><div class="bay"></div><i></i></div><div class="slot"><b>8</b><div class="bay"></div><i></i></div><div class="slot"><b>9</b><div class="bay"></div><i></i></div>
              </div>
            </div>
            <div class="sb v"><button aria-label="上"><svg><use href="#chev"/></svg></button><i class="thumb t-canvas"></i><button class="end dn" aria-label="下"><svg><use href="#chev"/></svg></button></div>
          </div>
          <div class="zoombar">
            <div class="sb h"><button class="lf" aria-label="左"><svg><use href="#chev"/></svg></button><i class="thumb t-h"></i><button class="end rt" aria-label="右"><svg><use href="#chev"/></svg></button></div>
            <div class="combo pct"><select aria-label="缩放" lang="en"><option>100%</option></select><span class="arr"></span></div>
            <input type="range" aria-label="缩放级别" min="0" max="6" value="3">
            <svg class="i"><use href="#zfit"/></svg>
          </div>
          <div class="watermark"><p>西门子工业 技术论坛</p><p class="url">support.industry.siemens.com/cs</p></div>
        </div>
        <div class="split"><i class="l"></i><i class="r"></i></div>
        <div class="overview">
          <div class="tabs"><button class="tab on ov">设备概览</button></div>
          <div class="ov-body">
            <div class="ov-main">
              <table class="otable rows">
                <thead><tr><th class="o1"></th><th class="o2"><svg class="i"><use href="#wrench"/></svg></th><th class="o3">...</th><th>模块</th></tr></thead>
                <tbody lang="en">
                  <tr><td></td><td></td><td></td><td class="in">HSC_4</td></tr>
                  <tr><td></td><td></td><td></td><td class="in">HSC_5</td></tr>
                  <tr><td></td><td></td><td></td><td class="in">HSC_6</td></tr>
                  <tr><td></td><td></td><td></td><td class="in">Pulse_1</td></tr>
                  <tr><td></td><td></td><td></td><td class="in">Pulse_2</td></tr>
                  <tr><td></td><td></td><td></td><td class="in">Pulse_3</td></tr>
                  <tr><td></td><td></td><td></td><td class="in">Pulse_4</td></tr>
                  <tr><td></td><td></td><td></td><td class="arrow"><b class="tri r"></b>PROFINET 接...</td></tr>
                  <tr class="osel"><td></td><td></td><td></td><td class="mid">AI 4x13BIT/AQ 2...</td></tr>
                  <tr class="e"><td></td><td></td><td></td><td></td></tr><tr class="e"><td></td><td></td><td></td><td></td></tr><tr class="e"><td></td><td></td><td></td><td></td></tr><tr class="e"><td></td><td></td><td></td><td></td></tr><tr class="e"><td></td><td></td><td></td><td></td></tr><tr class="e"><td></td><td></td><td></td><td></td></tr><tr class="e"><td></td><td></td><td></td><td></td></tr><tr><td></td><td></td><td></td><td></td></tr>
                </tbody>
              </table>
              <div class="ov-foot"><div class="sb h"><button class="lf" aria-label="左"><svg><use href="#chev"/></svg></button><i class="thumb t-oh"></i><button class="end rt" aria-label="右"><svg><use href="#chev"/></svg></button></div></div>
            </div>
            <div class="ov-side"><div class="ov-corner"></div><div class="sb v"><button aria-label="上"><svg><use href="#chev"/></svg></button><i class="thumb t-ov"></i><button class="end dn" aria-label="下"><svg><use href="#chev"/></svg></button></div></div>
          </div>
        </div>
      </div>
    </section>

    <section class="panel inspector">
      <div class="phead ihead"><h2 lang="en">AI 4x13BIT/AQ 2x14BIT_1 [Module]</h2><button class="tab top on"><svg class="i"><use href="#prop"/></svg>属性</button><button class="tab top"><svg class="i"><use href="#info"/></svg>信息<svg class="i push"><use href="#ibadge"/></svg></button><button class="tab top"><svg class="i"><use href="#diag"/></svg>诊断</button><div class="ibtns"><button aria-label="还原"><svg><use href="#restore"/></svg></button><button aria-label="列表"><svg><use href="#lines"/></svg></button><button aria-label="折叠"><svg><use href="#td"/></svg></button></div></div>
      <div class="tabs low"><button class="tab on t78">常规</button><button class="tab t101"><span lang="en">IO&nbsp;</span>变量</button><button class="tab t119">系统常数</button><button class="tab t78">文本</button></div>
      <div class="ins-body">
        <ul class="nav rows">
          <li class="l0"><b class="tri d"></b>常规</li>
          <li class="l1"><b class="tri"></b>项目信息</li>
          <li class="l1"><b class="tri"></b>目录信息</li>
          <li class="l0" lang="en"><b class="tri d"></b>AI 4/AQ 2</li>
          <li class="l1"><b class="tri r"></b>模拟量输入</li>
          <li class="l1"><b class="tri d"></b>模拟量输出</li>
          <li class="l2"><b class="tri"></b>通道0</li>
          <li class="l2"><b class="tri"></b><mark>通道1</mark></li>
          <li class="l1"><b class="tri"></b><span lang="en">I/O&nbsp;</span>地址</li>
          <li></li><li></li><li></li>
        </ul>
        <div class="split ins"><i class="l"></i><i class="r"></i></div>
        <div class="props">
          <h3><svg><use href="#chev"/></svg><span>通道1</span><i></i></h3>
          <form>
            <label class="off" for="addr">通道地址:</label><input id="addr" type="text" value="QW98" disabled lang="en">
            <label for="kind">模拟量输出的类型:</label><div class="combo"><select id="kind"><option>电压</option></select><span class="arr"></span></div>
            <label class="off" for="range">电压范围:</label><div class="combo offc"><select id="range" disabled lang="en"><option>+/- 10 V</option></select><span class="arr"></span></div>
            <label for="sub">从 <span lang="en">RUN</span> 模式切换到 <span lang="en">STOP</span> 模式<br>时，通道的替代值:</label><div class="combo unit"><input id="sub" type="text" value="0.000" lang="en"><span lang="en">V</span></div>
            <div class="check"><input type="checkbox" id="sc" checked><label for="sc">启用短路诊断</label></div>
          </form>
        </div>
        <div class="sb v"><button aria-label="上"><svg><use href="#chev"/></svg></button><i class="thumb t-ins"></i><button class="end dn" aria-label="下"><svg><use href="#chev"/></svg></button></div>
      </div>
    </section>
  </div>

  <section class="panel library">
    <div class="phead navy"><h2>库</h2><button aria-label="还原"><svg><use href="#restore"/></svg></button><button aria-label="列"><svg><use href="#cols"/></svg></button><button aria-label="折叠"><svg><use href="#tr"/></svg></button></div>
    <h3 class="opts">选项</h3>
    <div class="toolbar sub libview"><button class="label"><svg class="i"><use href="#back"/></svg>库视图</button><button aria-label="类型"><svg class="i"><use href="#libtri"/></svg></button><button class="push" aria-label="窗口"><svg class="i"><use href="#win"/></svg></button></div>
    <div class="acc"><button aria-label="展开"><svg class="rtc"><use href="#chev"/></svg></button><h2>项目库</h2></div>
    <div class="acc"><button aria-label="折叠"><svg class="dnc"><use href="#chev"/></svg></button><h2>全局库</h2></div>
    <div class="toolbar sub libtools"><button aria-label="新建库"><svg class="i"><use href="#booknew"/></svg></button><button aria-label="打开库"><svg class="i"><use href="#bookopen"/></svg></button><button aria-label="保存库"><svg class="i"><use href="#booksave"/></svg></button><button aria-label="恢复"><svg class="i"><use href="#bookundo"/></svg></button><button aria-label="导出"><svg class="i"><use href="#exp"/></svg></button><button aria-label="导入"><svg class="i"><use href="#imp"/></svg></button><button class="push" aria-label="新建文件夹"><svg class="i"><use href="#foldnew"/></svg></button><span class="sep"></span><button aria-label="列表"><svg class="i"><use href="#list"/></svg></button><b class="tri r"></b></div>
    <ul class="tree rows lib" lang="en">
      <li class="l0"><b class="tri r"></b><svg class="i"><use href="#book"/></svg>Buttons-and-Switches</li>
      <li class="l0 id"><b class="tri r"></b><svg class="i"><use href="#book"/></svg>Drive_Lib_S7_1200_1500</li>
      <li class="l0 id"><b class="tri r"></b><svg class="i"><use href="#book"/></svg>Drive_Lib_S7_300_400</li>
      <li class="l0"><b class="tri r"></b><svg class="i"><use href="#book"/></svg>Long Functions</li>
      <li class="l0"><b class="tri r"></b><svg class="i"><use href="#book"/></svg>Monitoring-and-control-objects</li>
      <li class="l0"><b class="tri r"></b><svg class="i"><use href="#book"/></svg>Documentation templates</li>
      <li class="l0 id"><b class="tri d"></b><svg class="i"><use href="#bookedit"/></svg>79047707_LSim_LIB_V3_0_0_V15</li>
      <li class="l1 hot" lang="zh"><b class="tri r"></b><svg class="i"><use href="#ftype"/></svg>类型</li>
      <li class="l1" lang="zh"><b class="tri d"></b><svg class="i"><use href="#fcopy"/></svg>主模板</li>
      <li class="l2 id"><b class="tri"></b><svg class="i fb"><use href="#fb"/></svg>LSim_AllPass1OrdReal</li>
      <li class="l2 id"><b class="tri"></b><svg class="i fb"><use href="#fb"/></svg>LSim_AllPass2OrdReal</li>
      <li class="l2 id"><b class="tri"></b><svg class="i fb"><use href="#fb"/></svg>LSim_DT1</li>
      <li class="l2 id"><b class="tri"></b><svg class="i fb"><use href="#fb"/></svg>LSim_I</li>
      <li class="l2 id"><b class="tri"></b><svg class="i fb"><use href="#fb"/></svg>LSim_IT1</li>
      <li class="l2 id"><b class="tri"></b><svg class="i fb"><use href="#fb"/></svg>LSim_Lagging</li>
      <li class="l2 id"><b class="tri"></b><svg class="i fb"><use href="#fb"/></svg>LSim_PDT1</li>
      <li class="l2 id"><b class="tri"></b><svg class="i fb"><use href="#fb"/></svg>LSim_PT1</li>
      <li class="l2 id"><b class="tri"></b><svg class="i fb"><use href="#fb"/></svg>LSim_PT1asym</li>
      <li class="l2 id"><b class="tri"></b><svg class="i fb"><use href="#fb"/></svg>LSim_PT2aper</li>
      <li class="l2 id"><b class="tri"></b><svg class="i fb"><use href="#fb"/></svg>LSim_PT2osc</li>
      <li class="l2 id"><b class="tri"></b><svg class="i fb"><use href="#fb"/></svg>LSim_PT3</li>
      <li class="l2 id"><b class="tri"></b><svg class="i fb"><use href="#fb"/></svg>LSim_PT3HeatCool</li>
      <li class="l2 id"><b class="tri"></b><svg class="i fb"><use href="#fb"/></svg>LSim_TempProcess</li>
      <li class="l2 id"><b class="tri"></b><svg class="i fb"><use href="#fb"/></svg>LSim_Valve</li>
      <li class="l2 id"><b class="tri r"></b><svg class="i"><use href="#foldtree"/></svg>LSim_Multizone</li>
      <li class="l1" lang="zh"><b class="tri r"></b><svg class="i"><use href="#fdata"/></svg>公共数据</li>
      <li class="l1" lang="zh"><b class="tri r"></b><svg class="i"><use href="#flang"/></svg>语言和资源</li>
      <li></li><li></li>
    </ul>
    <div class="acc"><button aria-label="展开"><svg class="rtc"><use href="#chev"/></svg></button><h2>信息 (全局库)</h2></div>
  </section>

  <aside class="rail right-rail">
    <button class="rtab r1"><svg class="i"><use href="#hw"/></svg><span>硬件目录</span></button>
    <button class="rtab r2"><svg class="i"><use href="#diag"/></svg><span>在线工具</span></button>
    <button class="rtab r3"><svg class="i"><use href="#task"/></svg><span>任务</span></button>
    <button class="rtab r4 on"><svg class="i"><use href="#book"/></svg><span>库</span></button>
  </aside>
</main>

<footer class="status">
  <button class="portal-view"><svg><use href="#tl"/></svg><span lang="en">Portal&nbsp;</span>视图</button>
  <button class="wintab"><svg class="i"><use href="#ovw"/></svg>总览</button>
  <button class="wintab on" lang="en"><svg class="i"><use href="#net"/></svg>PLC_1</button>
  <div class="msg"><svg class="msgicon" viewBox="0 0 24 24"><path d="M0 0h24v24H0z" fill="#c4c4cc"/><path d="M4 3h8v12H4z" fill="#fff"/><path d="M4 6h8M4 9h8M4 12h8" stroke="#88a"/><path d="M20 14V8h-4M18 5l-4 3 4 3" fill="none" stroke="#17206e" stroke-width="2"/><path d="M2 17h20v5H2z" fill="#17206e"/><path d="M4 19.500h16" stroke="#fff" stroke-width="2" stroke-dasharray="4 2"/></svg><span class="msgtext"><svg class="i" viewBox="0 0 20 20"><circle cx="10" cy="10" r="9.500" fill="#1212f0"/><path d="M5 10l4 4 7-8" fill="none" stroke="#fff" stroke-width="2.500"/></svg>库 79047707_LSim_LIB_V3_0_0_V15 ...</span></div>
</footer>

<div class="taskbar">
  <button class="tk" aria-label="开始"><svg width="22" height="22" viewBox="0 0 22 22"><path d="M1 3l8-1v8H1zM10 2l11-1v9H10zM1 11h8v8l-8-1zM10 11h11v10l-11-1z" fill="#fff"/></svg></button>
  <button class="tk" aria-label="搜索"><svg width="22" height="22" viewBox="0 0 22 22"><circle cx="14" cy="8" r="6.500" fill="none" stroke="#fff" stroke-width="1.500"/><path d="M9 13l-8 8" stroke="#fff" stroke-width="1.500"/></svg></button>
  <button class="tk" aria-label="助手"><svg width="22" height="22" viewBox="0 0 22 22"><circle cx="11" cy="11" r="8.500" fill="none" stroke="#fff" stroke-width="2.500"/></svg></button>
  <button class="tk" aria-label="任务视图"><svg width="22" height="22" viewBox="0 0 22 22"><path d="M2 6h12v10H2zM2 1v2h12V1M2 21v-2h12v2M20 1v20" fill="none" stroke="#fff" stroke-width="1.300"/><path d="M18.500 7h3v3h-3z" fill="#fff"/></svg></button>
  <button class="tk app" aria-label="Edge"><svg width="26" height="28" viewBox="0 0 26 28"><path d="M1 12C3 3 9 1 14 1c8 0 11 6 11 12v3H9c0 5 4 7 8 7 3 0 5-1 7-2v5c-2 1-5 2-8 2C8 28 3 23 4 16c0-4 3-7 6-8-1 1-1 3-1 4h8c0-4-2-5-5-5-5 0-9 2-11 5z" fill="#0078d7"/></svg></button>
  <button class="tk app lit" aria-label="文件"><svg width="28" height="26" viewBox="0 0 28 26"><path d="M0 1h11l2 3H0z" fill="#e0a010"/><path d="M0 4h28v19H0z" fill="#ffd35c"/><path d="M5 24v-11h18v11h-5v-6h-8v6z" fill="#3f95dc"/></svg></button>
  <button class="tk app" aria-label="浏览器"><svg width="28" height="28" viewBox="0 0 28 28"><circle cx="14" cy="14" r="13" fill="#fff"/><circle cx="14" cy="14" r="11.500" fill="#3eb024"/><path d="M7 14h14c0-9-14-9-14 0s9 9 13 5" fill="none" stroke="#fff" stroke-width="3.500"/><path d="M4 27C1 22 12 4 26 1" fill="none" stroke="#7ddc4a" stroke-width="1.800"/></svg></button>
  <button class="tk app lit" aria-label="WPS"><svg width="26" height="28" viewBox="0 0 26 28"><rect width="26" height="28" rx="4" fill="url(#gWps)"/><path d="M5 9h16l-4 11-4-8-4 8-4-11" fill="none" stroke="#fff" stroke-width="2"/></svg></button>
  <button class="tk app lit" aria-label="浏览器"><svg width="30" height="32" viewBox="0 0 30 32"><path d="M0 0h30v32H0z" fill="#e6f4fb"/><path d="M27 5c-4-2-14-3-20 3-7 7-5 19 5 19 8 0 12-5 13-12H14l-1 4h5c-1 3-4 4-6 4-4 0-5-5-2-9s9-6 15-4z" fill="#1a8ee0"/></svg></button>
  <button class="tk app lit" aria-label="猎豹"><svg width="26" height="28" viewBox="0 0 26 26"><use href="#lynx"/></svg></button>
  <button class="tk app lit now" aria-label="TIA"><svg width="30" height="32"><use href="#tia"/></svg></button>
  <div class="tray">
    <svg viewBox="0 0 20 20"><path d="M2 14l8-8 8 8" fill="none" stroke="#fff" stroke-width="1.500"/></svg>
    <svg viewBox="0 0 20 20"><path d="M1 13c-1-4 3-5 4-5 1-5 9-5 10 0 3 0 4 4 2 5z" fill="#c4c4c4"/><circle cx="14" cy="14" r="5.500" fill="#d81828"/><path d="M12 12l4 4M16 12l-4 4" stroke="#fff" stroke-width="1.500"/></svg>
    <svg viewBox="0 0 26 26"><use href="#lynx"/></svg>
    <svg viewBox="0 0 20 20"><path d="M1 3l18-2v16H1z" fill="none" stroke="#ddd" stroke-width="1.500"/><path d="M13 5H8v3h3M8 8v5h4" fill="none" stroke="#ccc" stroke-width="1.500"/><circle cx="15.500" cy="15" r="4" fill="#ff9800"/></svg>
    <svg viewBox="0 0 20 20"><path d="M5 6h14v9H5z" fill="#fff"/><path d="M19 9h1v3h-1z" fill="#fff"/><path d="M1 3v3h4V3M3 6v9h4" fill="none" stroke="#fff" stroke-width="1.500"/></svg>
    <svg viewBox="0 0 20 20"><path d="M2 18C2 9 9 2 18 2M6 18C6 11 11 6 18 6M10 18c0-5 3-8 8-8M14 18c0-2 2-4 4-4" fill="none" stroke="#ddd" stroke-width="1.500"/><circle cx="17" cy="17" r="1.500" fill="#fff"/></svg>
    <span class="ime">英</span>
    <div class="clock" lang="en"><span>12:14</span><span>2019/12/19</span></div>
  </div>
</div>
</body>
</html>
```
FILE: styles.css
```css
* { box-sizing: border-box; }
body {
  margin: 0;
  height: 100vh;
  display: flex;
  flex-direction: column;
  overflow: hidden;
  font-family: "Noto Sans", "Noto Sans CJK SC", sans-serif;
  font-size: 15px;
  line-height: 20px;
  color: #111;
  background: #1b2233;
}
[lang=en] { font-size: 14px; }
[lang=zh] { font-size: 15px; }
h1, h2, h3, p, ul { margin: 0; padding: 0; }
ul { list-style: none; }
button, input, select { font: inherit; color: inherit; }
button { border: 0; padding: 0; background: none; display: flex; align-items: center; }
a { color: inherit; text-decoration: none; }
.defs { position: absolute; width: 0; height: 0; }
.i { width: 20px; height: 20px; flex: none; display: block; }
.i.half { width: 10px; color: #777; }
.ob { color: #b010e0; }
.fb { color: #1090f0; }

/* title bar */
.titlebar {
  flex: none;
  height: 28px;
  display: flex;
  align-items: center;
  gap: 8px;
  padding: 0 5px 0 7px;
  background: linear-gradient(#8a8a8a, #4a4a4a 8px, #1c1c1c 9px);
  color: #fff;
}
.titlebar h1 { font-size: 18px; line-height: 26px; font-weight: 700; white-space: pre; }
.titlebar h1 span { font-size: 16px; }
.wbtns { margin-left: auto; display: flex; gap: 8px; }
.wbtns svg { width: 12px; height: 12px; display: block; }

/* menu and main toolbar */
.command {
  flex: none;
  height: 65px;
  display: flex;
  justify-content: space-between;
  background: #ccc;
  border-bottom: 2px solid #4c5264;
}
.menu { display: flex; gap: 23px; padding: 7px 0 5px 14px; white-space: nowrap; }
.toolbar { display: flex; align-items: center; }
.main-tools { height: 28px; padding-left: 17px; }
.grp { display: flex; align-items: center; gap: 10px; padding-right: 5px; }
.grp + .grp { border-left: 1px dotted #888; padding-left: 10px; }
.grp.tight { gap: 9px; }
.grp.online { padding-right: 10px; }
.tight .label { padding-right: 4px; }
.label { gap: 7px; white-space: nowrap; font-size: 16px; }
.label.off { color: #888; }
.undo button { gap: 4px; }
.find input {
  width: 150px;
  height: 22px;
  padding: 0 5px;
  border: 1px solid #888;
  background: #fff;
}
.find.grp { padding-left: 14px; }
.find ::placeholder { color: #777; opacity: 1; }
.brand { padding: 15px 30px 0 0; text-align: right; font-size: 18px; }
.brand p { line-height: 22px; padding-right: 30px; }
.brand .portal { padding: 0; font-size: 20px; font-weight: 600; color: #707070; }

/* work area */
.work { flex: 1; min-height: 0; display: flex; }
.panel { background: #ececec; display: flex; flex-direction: column; min-width: 0; min-height: 0; overflow: hidden; }
.rail { flex: none; width: 29px; background: #b0b0b0; display: flex; flex-direction: column; }
.rail-cap { height: 31px; border-bottom: 1px solid #fff; }
.rail-label {
  height: 275px;
  justify-content: center;
  writing-mode: vertical-rl;
  text-orientation: sideways;
  transform: rotate(180deg);
  color: #fff;
  font-size: 18px;
  font-weight: 600;
}
.rail-rest { flex: 1; border-top: 1px solid #fff; }
.project { flex: 0 0 412px; margin: 0 4px 0 1px; }
.center { flex: 1; min-width: 0; display: flex; flex-direction: column; gap: 4px; }
.library { flex: 0 0 423px; margin: 0 2px 0 3px; }

.phead {
  flex: none;
  height: 33px;
  display: flex;
  align-items: center;
  gap: 8px;
  padding: 0 7px 2px 7px;
  background: #b0b0b0;
  border-bottom: 4px solid #f0f0f0;
  color: #fff;
}
.phead h2 { margin-right: auto; font-size: 18px; line-height: 27px; font-weight: 700; white-space: nowrap; }
.phead h2 [lang=en], .phead h2[lang=en] { font-size: 17px; font-weight: 500; }
.phead svg:not(.i) { width: 15px; height: 15px; display: block; }
.navy { background: #2d344e; border-bottom-width: 1px; height: 30px; }
.crumb { display: inline-block; margin: 0 12px; border: 5px solid transparent; border-left-color: #fff; border-right-width: 0; }

.tabs { flex: none; height: 31px; display: flex; align-items: flex-end; gap: 3px; padding: 0 7px 0 8px; background: #cbcbcb; border-bottom: 1px solid #808080; }
.tabs.right { justify-content: flex-end; }
.tab {
  height: 26px;
  padding: 0 13px;
  border: 1px solid #808080;
  border-width: 1px 1px 0 1px;
  background: linear-gradient(#e2e2e2, #cfcfcf);
  color: #555;
  font-size: 18px;
  font-weight: 500;
  white-space: nowrap;
}
.tab [lang=en] { font-size: 17px; }
.tab.on { background: linear-gradient(#f6f6f6, #ebebeb); color: #000; height: 27px; margin-bottom: -1px; font-weight: 700; }
.tab.wide { width: 78px; }
.tab.view { width: 130px; padding: 0 3px; gap: 3px; }
.tab.ov { width: 119px; }
.tab.t78 { width: 78px; }
.tab.t101 { width: 99px; }
.tab.t119 { width: 117px; }

.sub { flex: none; height: 34px; padding: 0 8px; gap: 8px; background: #e9e9e9; }
.sep { align-self: stretch; margin: 2px 0; border-left: 1px dotted #888; }
.push { margin-left: auto; }
.boxed { width: 28px; height: 28px; justify-content: center; background: #fff; border: 2px solid #5b8ad8; border-radius: 3px; }
.blank { flex: none; height: 26px; background: #c3c3c3; }

/* scroll bars */
.sb { flex: none; display: flex; background: #c2c2c2; }
.sb.v { width: 22px; flex-direction: column; }
.sb.h { height: 21px; }
.sb button { flex: none; width: 22px; height: 22px; justify-content: center; background: #e6e6e6; border: 1px solid #8a8a8a; box-shadow: inset 0 0 0 1px #fff; color: #444; }
.sb.h button { height: 21px; }
.sb button svg { width: 12px; height: 12px; }
.sb .end { margin: auto 0 0 0; }
.sb.h .end { margin: 0 0 0 auto; }
.dn svg, .dnc { transform: rotate(180deg); }
.lf svg { transform: rotate(270deg); }
.rt svg, .rtc { transform: rotate(90deg); }
.thumb { flex: none; display: flex; align-items: center; justify-content: center; background: linear-gradient(90deg, #ececec, #d6d6d6); border: 1px solid #8a8a8a; box-shadow: inset 0 0 0 1px #fff; }
.thumb::after { content: ""; width: 10px; height: 11px; background: repeating-linear-gradient(#666 0 1px, transparent 1px 3px); }
.h .thumb::after { width: 11px; height: 12px; background: repeating-linear-gradient(90deg, #666 0 1px, transparent 1px 3px); }
.t-tree { height: 120px; margin-top: 2px; }
.t-canvas { height: 36px; margin-top: 6px; }
.t-ov { height: 144px; margin-top: 86px; }
.t-ins { height: 22px; margin-top: 1px; }
.t-h { width: 25px; margin-left: 14px; }
.t-oh { width: 22px; margin-left: 2px; }

/* trees */
.scrollbox { flex: 1; min-height: 0; display: flex; overflow: hidden; }
.tree { flex: 1; min-height: 0; overflow: hidden; }
.rows li { display: flex; align-items: center; height: 24px; padding-bottom: 1px; border-bottom: 1px solid #fcfcfc; background: #efefef; white-space: nowrap; overflow: hidden; }
.rows li:nth-child(4n) { height: 23px; }
.rows .id { font-size: 15px; }
.tree .i { margin: 0 5px 0 6px; }
.tree .tri { margin: 0; }
.two li::after { content: ""; margin-left: auto; flex: none; width: 24px; align-self: stretch; border-left: 2px solid #fcfcfc; }
.l0 { padding-left: 8px; }
.l1 { padding-left: 30px; }
.l2 { padding-left: 52px; }
.l3 { padding-left: 75px; }
.tree .dark { background: #e0e0e0; }
.medium { font-weight: 500; }
.tree .sel { background: #d0d5da; outline: 1px dotted #666; outline-offset: -1px; }
.tree .hot { background: #b3c0de; outline: 2px dotted #5b84dc; outline-offset: -2px; }
.tri { flex: none; width: 10px; height: 10px; display: inline-flex; justify-content: center; align-items: center; }
.tri.d::before { content: ""; border: 5px solid transparent; border-top: 6px solid #111; border-bottom: 0; }
.tri.r::before { content: ""; border: 5px solid transparent; border-left: 6px solid #111; border-right: 0; }

/* details view */
.details { flex: 0 0 400px; border-top: 4px solid #1b2233; overflow: hidden; background: #efefef; }
.acc { flex: none; height: 30px; display: flex; border-top: 4px solid #999; border-bottom: 1px solid #808080; background: linear-gradient(#ececec, #d2d2d2); }
.details .acc { height: 27px; border-top: 0; }
.acc button { width: 25px; justify-content: center; border-right: 1px solid #888; }
.acc svg { width: 13px; height: 13px; }
.acc h2 { padding-left: 6px; font-size: 18px; line-height: 26px; font-weight: 700; }
.band1 { height: 31px; background: #cbcbcb; border-bottom: 1px solid #808080; }
.band2 { height: 34px; background: #e9e9e9; }
table { border-collapse: separate; border-spacing: 0; table-layout: fixed; width: 100%; }
th { height: 23px; padding: 0 5px; text-align: left; font-weight: 400; line-height: 20px; background: linear-gradient(#c9c9c9, #e6e6e6 4px, #d2d2d2 70%, #e4e4e4); border-right: 1px solid #aaa; border-bottom: 1px solid #aaa; }
td { height: 24px; padding: 0 5px; line-height: 20px; border-bottom: 1px solid #fcfcfc; white-space: nowrap; overflow: hidden; }
tr:nth-child(4n) td { height: 23px; }
.dtable td:first-child { padding: 0 1px; }
.c-ic { width: 24px; }
.c-nm { width: 200px; }
.c-dt { width: 100px; }
.dsel .shade, .dsel .focus { background: #d0d5da; }
.focus { outline: 1px dotted #666; outline-offset: -1px; }

/* device editor */
.editor { flex: 1; }
.edit-body { flex: 1; min-height: 0; display: flex; }
.device { flex: 1; min-width: 0; display: flex; flex-direction: column; position: relative; }
.dev-tools { padding: 0 18px 0 9px; gap: 7px; }
.dev-tools .half { color: #111; }
.zoomer { gap: 2px; }
.combo { display: flex; height: 22px; border: 1px solid #888; background: #fff; }
.combo select, .combo input { flex: 1; min-width: 0; appearance: none; border: 0; background: none; padding: 0 5px; outline: 0; }
.arr { flex: none; width: 20px; display: flex; align-items: center; justify-content: center; border-left: 1px solid #888; background: linear-gradient(#f2f2f2, #c8c8c8); }
.arr::before { content: ""; border: 5px solid transparent; border-top-color: #111; border-bottom: 0; }
.combo.dev { width: 225px; }
.canvas-row { flex: 1; min-height: 0; display: flex; }
.canvas { flex: 1; min-width: 0; background: #fff; position: relative; overflow: hidden; padding: 105px 11px 0 0; }
.tag { position: absolute; transform: rotate(-45deg); transform-origin: 0 100%; white-space: nowrap; line-height: 20px; }
.plc-tag { left: 35px; top: 42px; }
.ai-tag { left: 245px; top: 47px; padding: 0 8px; background: #8a93a5; font-weight: 500; }
.rack { display: grid; grid-template-columns: 17px 213px 87px repeat(7, 1fr); }
.slot b { display: flex; align-items: center; justify-content: center; height: 34px; background: #cbccda; font-weight: 600; }
.slot { border-right: 1px solid #fff; }
.slot i { display: block; height: 10px; background: #cbccda; }
.bay {
  height: 190px;
  border-top: 2px solid #fff;
  background: linear-gradient(#fff 57px, #e0dfe9 57px 71px, #bdbfd2 71px 72px, #e0dfe9 72px 118px, #ececf2 118px 119px, #e0dfe9 119px 131px, #fff 131px);
  box-shadow: inset -2px 0 0 #ecebf2;
}
.mod { display: block; width: 100%; height: 188px; }
.picked { outline: 2px solid #8790a2; outline-offset: -1px; padding: 0 1px; }
.zoombar { flex: none; height: 21px; display: flex; align-items: center; background: #e9e9e9; }
.zoombar .sb { flex: 0 0 398px; }
.zoombar .combo { height: 21px; width: 194px; margin-left: 9px; }
.zoombar input { flex: 1; min-width: 0; height: 20px; margin: 0 24px 0 22px; appearance: none; background: linear-gradient(#888, #888) 0 8px / 100% 1px no-repeat, repeating-linear-gradient(90deg, #222 0 1px, transparent 1px 13px) 0 15px / 100% 4px no-repeat; }
.zoombar input::-webkit-slider-thumb { appearance: none; width: 9px; height: 14px; background: #ddd; border: 1px solid #777; border-radius: 0 0 5px 5px; }
.watermark {
  position: absolute;
  left: 363px;
  bottom: -8px;
  transform: rotate(-30deg);
  transform-origin: 0 100%;
  color: rgba(255, 255, 255, .55);
  -webkit-text-stroke: 1px rgba(190, 190, 190, .6);
  white-space: nowrap;
  pointer-events: none;
  z-index: 2;
}
.watermark p { font-size: 36px; line-height: 40px; }
.watermark .url { font-size: 25px; line-height: 26px; }
.split { flex: none; width: 11px; background: #d6d6d6; border: 1px solid #999; border-width: 1px 0 0 1px; display: flex; flex-direction: column; justify-content: center; align-items: flex-end; gap: 12px; }
.split i { width: 8px; height: 30px; border: 1px solid #888; border-width: 1px 0; display: flex; align-items: center; background: #ccc; }
.split i::before { content: ""; border: 4px solid transparent; }
.split .l::before { border-right-color: #111; border-left: 0; }
.split .r::before { border-left-color: #111; border-right: 0; }
.overview { flex: 0 0 255px; display: flex; flex-direction: column; min-height: 0; background: #e9e9e9; }
.overview .tabs { height: 34px; }
.ov-body { flex: 1; min-height: 0; display: flex; padding-top: 11px; }
.ov-main { flex: 1; min-width: 0; display: flex; flex-direction: column; background: #c8c8c8; }
.otable th { height: 23px; background: linear-gradient(#f4f5f8, #d3d9e3); padding: 0 4px; }
.otable .o1 { width: 32px; background: #ddd; }
.otable .o2 { width: 23px; padding: 0 1px; }
.otable .o3 { width: 25px; }
.otable td { border-right: 1px solid #fcfcfc; background: #efefef; }
.otable td:nth-child(2), .otable td:nth-child(3), .otable .e td { background: #e0e0e0; }
.otable td:first-child, .otable .e td:first-child { background: #c9c9c9; }
.otable .in { padding-left: 51px; }
.otable .arrow { padding: 0 0 0 30px; }
.arrow .tri { margin-right: 11px; }
.otable .mid { padding: 0 0 0 29px; }
.otable .osel td { background: #d3d9de; }
.otable .osel td:first-child { background: #bcc7d3; }
.ov-foot { margin-top: auto; padding-left: 32px; }
.ov-side { display: flex; flex-direction: column; }
.ov-corner { height: 25px; background: linear-gradient(#ddd, #c8c8c8); border: 1px solid #aaa; }
.ov-side .sb { flex: 1; margin-bottom: 21px; }

/* inspector */
.inspector { flex: 0 0 336px; }
.ihead { height: 34px; gap: 2px; align-items: flex-end; padding: 0 6px 0 7px; }
.phead.ihead h2 { line-height: 30px; }
.ihead .tab { width: 93px; padding: 0 4px; gap: 5px; }
.ihead .tab:nth-of-type(2) { width: 102px; }
.ihead .tab.on { margin-bottom: 0; height: 26px; }
.ibtns { display: flex; gap: 8px; margin: 0 0 8px 22px; }
.ins-body { flex: 1; min-height: 0; display: flex; padding-top: 3px; background: #e9e9e9; }
.nav { flex: 0 0 248px; overflow: hidden; background: #efefef; }
.nav li { border-bottom-color: #e9e9e9; }
.nav .tri { margin-right: 8px; }
.nav .l0 { padding-left: 6px; }
.nav .l1 { padding-left: 26px; }
.nav .l2 { padding-left: 45px; }
mark { background: #c3cdd8; color: inherit; line-height: 23px; padding-right: 2px; }
.split.ins { width: 9px; }
.props { flex: 1; min-width: 0; padding: 0 8px 0 16px; display: flex; flex-direction: column; }
.props h3 { flex: none; height: 45px; display: flex; align-items: center; font-size: 17px; font-weight: 400; padding-top: 4px; }
.props h3 svg { width: 8px; height: 8px; margin: 0 18px 0 2px; transform: rotate(90deg); }
.props h3 i { flex: 1; border-bottom: 2px solid #444; margin: 14px 0 0 14px; }
.props form {
  flex: 1;
  display: grid;
  grid-template-columns: 241px 1fr;
  grid-auto-rows: min-content;
  gap: 8px 14px;
  padding: 30px 15px 0 0;
  background: #cbcbcb;
}
form > label { text-align: right; line-height: 18px; align-self: center; }
form > input { height: 22px; border: 1px solid #888; background: none; padding: 0 5px; min-width: 0; }
form .off, form :disabled { color: #8c8c8c; opacity: 1; }
.offc { background: none; }
.offc .arr { background: #e6e6e6; }
.offc .arr::before { border-top-color: #888; }
.unit { align-self: end; }
.unit span { flex: none; width: 18px; background: #e3e3e3; text-align: center; color: #555; }
.check { grid-column: 2; display: flex; align-items: center; gap: 4px; padding-top: 30px; }
.check input { appearance: none; margin: 0; width: 19px; height: 19px; border: 2px solid #3a5a80; border-radius: 3px; background: linear-gradient(#fff, #5cd0f0); display: flex; justify-content: center; }
.check input:checked::after { content: ""; width: 6px; height: 11px; border: solid #10408c; border-width: 0 3px 3px 0; transform: rotate(45deg); }

/* library */
.opts { flex: none; height: 34px; padding-left: 7px; font-size: 18px; line-height: 36px; font-weight: 600; background: linear-gradient(#dcdcdc, #f2f2f2 40%, #e4e4e4); border-bottom: 1px solid #888; }
.libview { height: 32px; padding: 0 7px 4px 5px; gap: 13px; }
.libtools { height: 30px; padding: 0 8px; gap: 10px; }
.libtools .tri { align-self: flex-start; margin-top: 3px; }

/* right rail */
.right-rail { padding-top: 37px; gap: 4px; }
.rtab { width: 26px; flex-direction: column; gap: 8px; padding-top: 4px; background: linear-gradient(90deg, #ddd, #d0d0d0); border: 1px solid #888; border-width: 1px 2px 2px 0; color: #555; }
.rtab span { writing-mode: vertical-rl; text-orientation: sideways; font-size: 18px; line-height: 22px; }
.r1 { height: 132px; }
.r2 { height: 130px; }
.r3 { height: 92px; }
.r4 { height: 71px; }
.rtab.on { background: #f4f4f4; color: #000; font-weight: 700; }

/* status bar */
.status { flex: none; height: 36px; display: flex; align-items: center; gap: 3px; background: #1c1c1c; color: #fff; }
.portal-view { width: 223px; padding-left: 41px; font-size: 18px; font-weight: 700; }
.portal-view [lang=en] { font-size: 16px; }
.portal-view svg { width: 16px; height: 16px; margin-right: 9px; }
.wintab { width: 142px; height: 26px; padding: 0 4px; gap: 6px; background: #c2c2c2; border: 1px solid #777; color: #111; }
.wintab.on { background: #fff; }
.msg { margin-left: auto; width: 445px; display: flex; align-items: center; gap: 7px; align-self: stretch; }
.msgicon { width: 25px; height: 25px; }
.msgtext { display: flex; align-items: center; align-self: stretch; border-left: 1px solid #555; padding-left: 5px; white-space: pre; }
.msgtext .i { margin-right: 6px; }

/* system task bar */
.taskbar { flex: none; height: 51px; display: flex; background: linear-gradient(90deg, #434344 0 48%, #36474a 58%, #3a4648 68%, #434546 80%); color: #fff; }
.tk { width: 60px; justify-content: center; }
.tk.app { width: 62px; }
.tk.app:nth-child(5) { margin-left: 3px; }
.tk.lit { background: linear-gradient(#76b9ed, #76b9ed) 50% 100% / 51px 3px no-repeat; }
.tk.now { background: linear-gradient(#76b9ed, #76b9ed) 0 100% / 100% 3px no-repeat, #6c6c6e; }
.tray { margin-left: auto; display: flex; align-items: center; gap: 10px; padding-right: 11px; }
.tray svg { width: 20px; height: 20px; }
.ime { font-size: 20px; }
.clock { display: flex; flex-direction: column; align-items: center; font-size: 16px; line-height: 23px; }
```
